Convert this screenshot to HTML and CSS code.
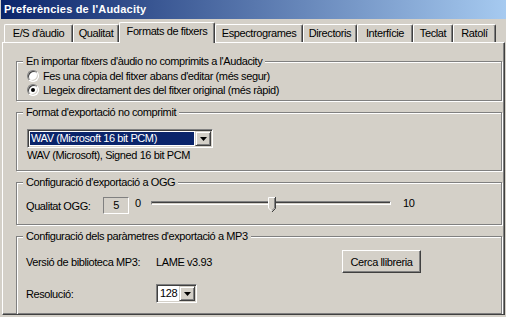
FILE: index.html
```html
<!DOCTYPE html>
<html lang="ca">

<head>
    <meta charset="UTF-8">
    <meta name="viewport" content="width=device-width, initial-scale=1.0">
    <title>Preferències de l'Audacity</title>
    <link rel="stylesheet" href="styles.css">
</head>

<body>

    <div class="titlebar">Preferències de l'Audacity</div>

    <div class="tabs">
        <div class="tab">E/S d'àudio</div>
        <div class="tab">Qualitat</div>
        <div class="tab is-active">Formats de fitxers</div>
        <div class="tab">Espectrogrames</div>
        <div class="tab">Directoris</div>
        <div class="tab">Interfície</div>
        <div class="tab">Teclat</div>
        <div class="tab">Ratolí</div>
    </div>

    <div class="panel">

        <div class="group group-import">
            <span class="group-title">En importar fitxers d'àudio no comprimits a l'Audacity</span>
            <div class="radio-row"><span class="radio"></span>Fes una còpia del fitxer abans d'editar (més segur)</div>
            <div class="radio-row"><span class="radio radio-on"></span>Llegeix directament des del fitxer original (més ràpid)</div>
        </div>

        <div class="group group-format">
            <span class="group-title">Format d'exportació no comprimit</span>
            <div class="combo combo-format">
                <span class="combo-value is-selected">WAV (Microsoft 16 bit PCM)</span>
                <span class="combo-btn">
                    <svg width="7" height="4" viewBox="0 0 7 4"><polygon points="0,0 7,0 3.5,4" fill="#000"/></svg>
                </span>
            </div>
            <div class="format-desc">WAV (Microsoft), Signed 16 bit PCM</div>
        </div>

        <div class="group group-ogg">
            <span class="group-title">Configuració d'exportació a OGG</span>
            <div class="ogg-row">
                <span class="ogg-label">Qualitat OGG:</span>
                <span class="field">5</span>
                <span class="slider-min">0</span>
                <div class="slider">
                    <div class="slider-track"></div>
                    <svg class="slider-thumb" style="left: 50%" width="8" height="16" viewBox="0 0 8 16">
                        <polygon points="0,0 8,0 8,11 4,15 0,11" fill="#d4d0c8"/>
                        <path d="M0.5 11 V0.5 H7" stroke="#fff" fill="none"/>
                        <path d="M7.5 0 V11.5 L4 15" stroke="#404040" fill="none"/>
                        <path d="M6.5 1 V11 L4 13.5" stroke="#808080" fill="none"/>
                        <path d="M0.5 11 L3.5 14" stroke="#fff" fill="none"/>
                    </svg>
                </div>
                <span class="slider-max">10</span>
            </div>
        </div>

        <div class="group group-mp3">
            <span class="group-title">Configuració dels paràmetres d'exportació a MP3</span>
            <div class="mp3-row">
                <span class="mp3-label">Versió de biblioteca MP3:</span>
                <span class="mp3-value">LAME v3.93</span>
                <button type="button" class="button">Cerca llibreria</button>
            </div>
            <div class="mp3-row">
                <span class="mp3-label">Resolució:</span>
                <div class="combo combo-bitrate">
                    <span class="combo-value">128</span>
                    <span class="combo-btn">
                        <svg width="7" height="4" viewBox="0 0 7 4"><polygon points="0,0 7,0 3.5,4" fill="#000"/></svg>
                    </span>
                </div>
            </div>
        </div>

    </div>

</body>

</html>
```

FILE: styles.css
```css
* {
    box-sizing: border-box;
}

body {
    margin: 0;
    width: 506px;
    height: 317px;
    overflow: hidden;
    background-color: #d4d0c8;
    font-family: "Liberation Sans", Arial, sans-serif;
    font-size: 11px;
    letter-spacing: -0.4px;
    color: #000;
}

/* window caption */
.titlebar {
    height: 19px;
    margin-left: 1px;
    padding-left: 3px;
    line-height: 19px;
    font-weight: bold;
    letter-spacing: 0.2px;
    color: #fff;
    background: linear-gradient(to right, #0a246a, #a6caf0);
}

/* tab strip */
.tabs {
    display: flex;
    align-items: flex-end;
    height: 20px;
    margin-top: 3px;
    padding-left: 4px;
}

.tab {
    height: 18px;
    padding-top: 2px;
    line-height: 13px;
    text-align: center;
    white-space: nowrap;
    border: 1px solid;
    border-bottom: 0;
    border-color: #fff #404040 #fff #fff;
    border-radius: 2px 2px 0 0;
    box-shadow: inset -1px 0 #808080;
}

.tab:nth-child(1) { width: 69px; }
.tab:nth-child(2) { width: 46px; }
.tab:nth-child(3) { width: 96px; }
.tab:nth-child(4) { width: 88px; }
.tab:nth-child(5) { width: 54px; }
.tab:nth-child(6) { width: 56px; }
.tab:nth-child(7) { width: 40px; }
.tab:nth-child(8) { width: 43px; }

.tab.is-active {
    position: relative;
    z-index: 1;
    height: 21px;
    margin-bottom: -1px;
    background-color: #d4d0c8;
}

/* tab page */
.panel {
    margin-left: 2px;
    width: 503px;
    height: 273px;
    overflow: hidden;
    padding: 0 2px 0 13px;
    border: 1px solid;
    border-color: #fff #404040 #404040 #fff;
    box-shadow: inset -1px -1px #808080;
}

.group {
    position: relative;
    margin-top: 11px;
    border: 1px solid #808080;
    box-shadow: inset 1px 1px #fff, 1px 1px #fff;
}

.group-title {
    position: absolute;
    top: -7px;
    left: 6px;
    padding: 0 3px;
    line-height: 13px;
    white-space: nowrap;
    background-color: #d4d0c8;
}

.group-import {
    height: 40px;
    margin-top: 18px;
    padding: 7px 0 0 10px;
}

.group-format {
    height: 59px;
    padding: 16px 0 0 10px;
}

.group-ogg {
    height: 43px;
    padding: 14px 0 0 9px;
}

.group-mp3 {
    height: 90px;
    padding: 13px 0 0 9px;
}

/* radio buttons */
.radio-row {
    display: flex;
    align-items: center;
    gap: 4px;
    height: 14px;
    white-space: nowrap;
}

.radio {
    width: 12px;
    height: 12px;
    border-radius: 50%;
    background-color: #fff;
    border: 1px solid;
    border-color: #808080 #fff #fff #808080;
    box-shadow: inset 1px 1px #404040, inset -1px -1px #d4d0c8;
}

.radio-on::after {
    content: "";
    display: block;
    width: 4px;
    height: 4px;
    margin: 3px;
    border-radius: 50%;
    background-color: #000;
}

/* drop-down lists */
.combo {
    display: flex;
    height: 19px;
    padding: 1px;
    background-color: #fff;
    border: 1px solid;
    border-color: #808080 #fff #fff #808080;
    box-shadow: inset 1px 1px #404040, inset -1px -1px #d4d0c8;
}

.combo-format {
    width: 186px;
}

.combo-bitrate {
    width: 41px;
}

.combo-value {
    flex: 1;
    margin: 1px;
    padding-left: 1px;
    line-height: 13px;
    white-space: nowrap;
}

.combo-value.is-selected {
    background-color: #0a246a;
    color: #fff;
}

.combo-btn {
    display: flex;
    align-items: center;
    justify-content: center;
    width: 16px;
    background-color: #d4d0c8;
    border: 1px solid;
    border-color: #d4d0c8 #404040 #404040 #d4d0c8;
    box-shadow: inset 1px 1px #fff, inset -1px -1px #808080;
}

.format-desc {
    margin-top: 1px;
    line-height: 13px;
}

/* ogg quality */
.ogg-row {
    display: flex;
    align-items: center;
    height: 17px;
}

.ogg-label {
    width: 77px;
}

.field {
    width: 26px;
    height: 17px;
    line-height: 15px;
    text-align: center;
    border: 1px solid;
    border-color: #808080 #fff #fff #808080;
}

.slider-min {
    align-self: flex-start;
    width: 16px;
    margin-left: 6px;
    line-height: 13px;
}

.slider {
    position: relative;
    align-self: stretch;
    width: 240px;
}

.slider-track {
    height: 4px;
    margin-top: 4px;
    border: 1px solid;
    border-color: #808080 #fff #fff #808080;
    box-shadow: inset 0 1px #404040;
}

.slider-thumb {
    position: absolute;
    top: 0;
    margin-left: -3px;
}

.slider-max {
    align-self: flex-start;
    margin-left: 12px;
    line-height: 12px;
}

/* mp3 */
.mp3-row {
    display: flex;
    align-items: center;
}

.mp3-row + .mp3-row {
    margin-top: 11px;
}

.mp3-label {
    width: 130px;
}

.mp3-value {
    width: 186px;
}

.button {
    width: 79px;
    height: 23px;
    padding: 0;
    font: inherit;
    letter-spacing: inherit;
    color: #000;
    background-color: #d4d0c8;
    border: 1px solid;
    border-color: #fff #404040 #404040 #fff;
    box-shadow: inset -1px -1px #808080;
}
```
